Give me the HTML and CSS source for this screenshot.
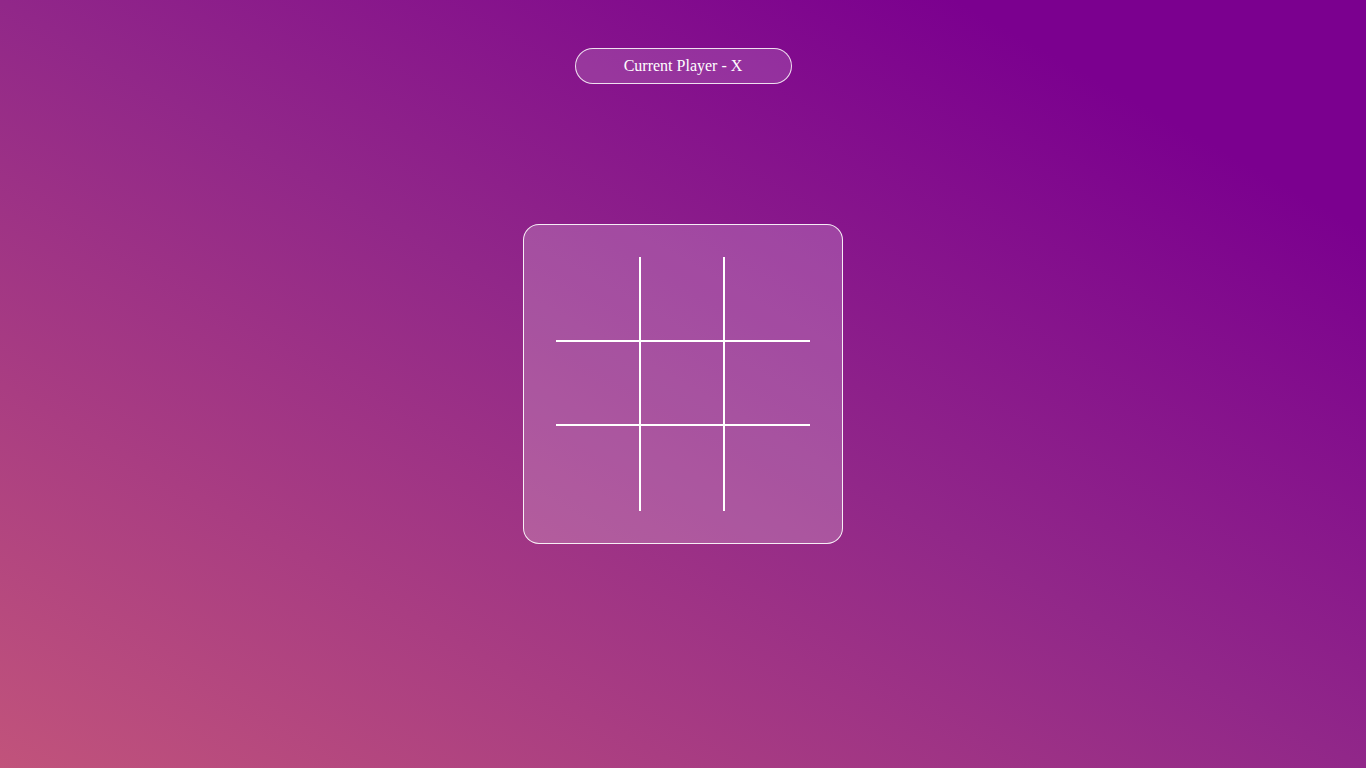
FILE: index.html
```html
<!DOCTYPE html>
<html lang="en">
<head>
<meta charset="utf-8">
<title>Tic Tac Toe</title>
<link rel="stylesheet" href="styles.css">
</head>
<body>
<main class="page">
  <header class="top">
    <div class="status">Current Player - X</div>
  </header>
  <section class="board">
    <div class="grid">
      <div class="cell c1 r1"></div>
      <div class="cell c2 r1"></div>
      <div class="cell c3 r1"></div>
      <div class="cell c1 r2"></div>
      <div class="cell c2 r2"></div>
      <div class="cell c3 r2"></div>
      <div class="cell c1 r3"></div>
      <div class="cell c2 r3"></div>
      <div class="cell c3 r3"></div>
    </div>
  </section>
  <div class="bottom"></div>
</main>
</body>
</html>
```
FILE: styles.css
```css
* { box-sizing: border-box; }
html, body { margin: 0; padding: 0; height: 100%; }
body {
  font-family: "Liberation Serif", "Times New Roman", serif;
  color: #fff;
  background: linear-gradient(to top right, #c1537b 0%, #912789 50%, #7b008f 85%);
  overflow: hidden;
}
.page {
  height: 100vh;
  display: grid;
  grid-template-rows: 1fr auto 1fr;
  justify-items: center;
}
.top {
  align-self: start;
  padding-top: 48px;
}
.status {
  width: 217px;
  height: 36px;
  border: 1px solid rgba(255, 255, 255, 0.85);
  border-radius: 18px;
  background: rgba(255, 255, 255, 0.15);
  display: flex;
  align-items: center;
  justify-content: center;
  font-size: 16px;
  padding-bottom: 1px;
}
.board {
  width: 320px;
  height: 320px;
  border: 1px solid rgba(255, 255, 255, 0.9);
  border-radius: 16px;
  background: rgba(255, 255, 255, 0.2);
  padding: 32px;
}
.grid {
  display: grid;
  grid-template-columns: 85px 84px 85px;
  grid-template-rows: 85px 84px 85px;
}
.c1, .c2 { border-right: 2px solid #fff; }
.r1, .r2 { border-bottom: 2px solid #fff; }
```
